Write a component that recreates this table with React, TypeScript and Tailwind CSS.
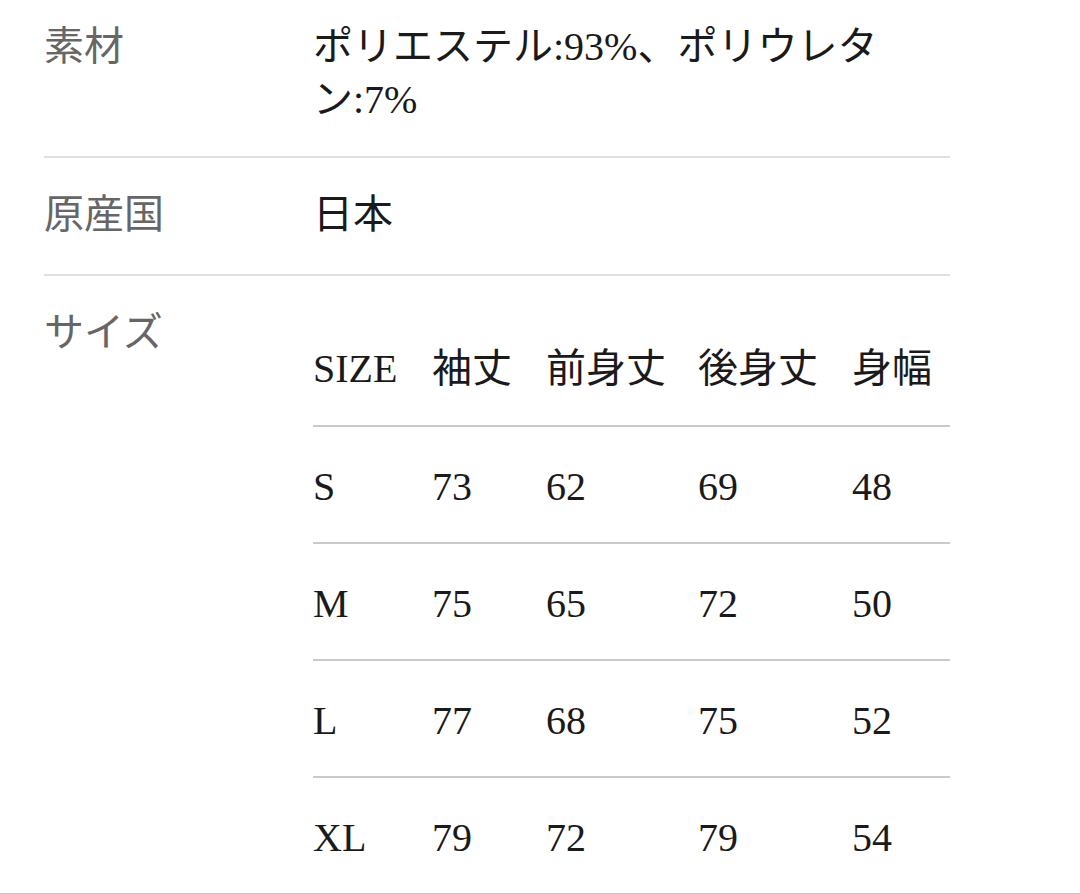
import React from 'react';

const font = { fontFamily: '"Liberation Serif", "Noto Sans CJK JP", serif' };

const rows = [
  ['S', '73', '62', '69', '48'],
  ['M', '75', '65', '72', '50'],
  ['L', '77', '68', '75', '52'],
  ['XL', '79', '72', '79', '54'],
];

const head = ['SIZE', '袖丈', '前身丈', '後身丈', '身幅'];

const cols = 'grid grid-cols-[119px_114px_152px_154px_1fr]';

export default function App() {
  return (
    <div className="w-[1080px] bg-white text-[40px] leading-[53px]" style={font}>
      <div className="ml-[44px] w-[906px]">
        <div className="flex pt-[20px] pb-[30px] border-b-2 border-[#e0e0e0]">
          <div className="w-[269px] shrink-0 text-[#666666]">素材</div>
          <div className="text-[#1a1a1a] whitespace-nowrap">
            ポリエステル:93%、ポリウレタ
            <br />
            ン:7%
          </div>
        </div>

        <div className="flex pt-[30px] pb-[33px] border-b-2 border-[#e0e0e0]">
          <div className="w-[269px] shrink-0 text-[#666666]">原産国</div>
          <div className="text-[#1a1a1a]">日本</div>
        </div>

        <div className="flex pt-[30px]">
          <div className="w-[269px] shrink-0 text-[#666666]">サイズ</div>
          <div className="flex-1 text-[#1a1a1a]">
            <div className={`${cols} pt-[36px] pb-[30px] whitespace-nowrap`}>
              {head.map((h) => (
                <div key={h}>{h}</div>
              ))}
            </div>
            {rows.map((r) => (
              <div key={r[0]} className={`${cols} border-t-2 border-[#cacaca] pt-[33px] pb-[29px]`}>
                {r.map((c, i) => (
                  <div key={i}>{c}</div>
                ))}
              </div>
            ))}
          </div>
        </div>
      </div>
      <div className="h-px w-full bg-[#c0c0c0]" />
    </div>
  );
}
